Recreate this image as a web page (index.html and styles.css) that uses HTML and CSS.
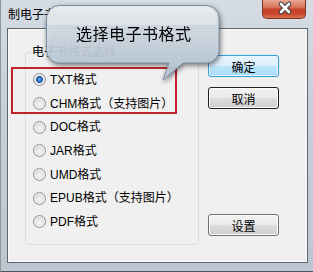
FILE: index.html
```html
<!DOCTYPE html>
<html>
<head>
<meta charset="utf-8">
<link rel="stylesheet" href="styles.css">
</head>
<body>
<div class="window">
  <div class="titlebar">
    <span class="title">制电子书</span>
    <span class="close">
      <svg width="44" height="19" viewBox="0 0 44 19">
        <path d="M18,5 L26,13 M26,5 L18,13" stroke="#3b3b3b" stroke-width="4.6" stroke-linecap="round" fill="none"/>
        <path d="M18,5 L26,13 M26,5 L18,13" stroke="#ffffff" stroke-width="2.6" stroke-linecap="round" fill="none"/>
      </svg>
    </span>
  </div>
  <div class="client">
    <fieldset class="group">
      <legend class="legend">电子书格式选择</legend>
      <div class="options">
        <label class="opt"><span class="radio checked"></span><span class="lbl">TXT格式</span></label>
        <label class="opt"><span class="radio"></span><span class="lbl">CHM格式（支持图片）</span></label>
        <label class="opt"><span class="radio"></span><span class="lbl">DOC格式</span></label>
        <label class="opt"><span class="radio"></span><span class="lbl">JAR格式</span></label>
        <label class="opt"><span class="radio"></span><span class="lbl">UMD格式</span></label>
        <label class="opt"><span class="radio"></span><span class="lbl">EPUB格式（支持图片）</span></label>
        <label class="opt"><span class="radio"></span><span class="lbl">PDF格式</span></label>
      </div>
    </fieldset>
    <div class="buttons">
      <button class="btn default">确定</button>
      <button class="btn focused">取消</button>
      <button class="btn settings">设置</button>
    </div>
  </div>
  <div class="highlight"></div>
  <div class="callout">
    <svg class="bubble" width="182" height="80" viewBox="0 0 182 80">
      <defs>
        <linearGradient id="bg" x1="0" y1="0" x2="0" y2="1">
          <stop offset="0" stop-color="#eef3f8"/>
          <stop offset="0.45" stop-color="#d3dee9"/>
          <stop offset="1" stop-color="#b9cadb"/>
        </linearGradient>
      </defs>
      <path d="M13.5,0.5 H160 A13,13 0 0 1 173,13.5 V45 A13,13 0 0 1 160,58 H137 L117,75 L123,58 H13.5 A13,13 0 0 1 0.5,45 V13.5 A13,13 0 0 1 13.5,0.5 Z" fill="url(#bg)" fill-opacity="0.88" stroke="#7a8ea6" stroke-width="1"/>
      <path d="M14,2.5 H159 A11,11 0 0 1 170.5,13.5 V20 H2.5 V13.5 A11,11 0 0 1 14,2.5 Z" fill="#ffffff" fill-opacity="0.3"/>
    </svg>
    <span class="callout-text">选择电子书格式</span>
  </div>
</div>
</body>
</html>
```
FILE: styles.css
```css
html, body {
  margin: 0;
  padding: 0;
}
body {
  width: 313px;
  height: 272px;
  overflow: hidden;
  font-family: "Liberation Sans", "Noto Sans CJK SC", sans-serif;
  font-size: 12px;
  color: #000;
}
.window {
  position: relative;
  width: 313px;
  height: 272px;
  box-sizing: border-box;
  padding: 0 5px 8px 6px;
  display: flex;
  flex-direction: column;
  background: linear-gradient(180deg, #d5dce4 0%, #c9d2dc 30%, #bcc6d1 100%);
  border-left: 1px solid #8d969f;
  border-bottom: 1px solid #4f565c;
}
.titlebar {
  height: 28px;
  display: flex;
  justify-content: space-between;
  align-items: flex-start;
}
.title {
  margin-top: 7px;
  margin-left: 1px;
  font-size: 12px;
  line-height: 16px;
  color: #000;
}
.close {
  width: 44px;
  height: 19px;
  margin-right: 2px;
  box-sizing: border-box;
  border: 1px solid #7a3326;
  border-top: none;
  border-radius: 0 0 5px 5px;
  background: linear-gradient(180deg, #e9a795 0%, #d8735c 40%, #c6452b 52%, #c9442a 75%, #d8704f 100%);
  display: block;
  overflow: hidden;
}
.close svg {
  display: block;
  margin-top: -1px;
}
.client {
  flex: 1;
  display: flex;
  background: #f0f0f0;
  border: 1px solid #5f666c;
  box-shadow: inset 0 0 0 1px #fafafa;
  padding: 16px 0 0 17px;
}
.group {
  width: 174px;
  height: 200px;
  box-sizing: border-box;
  margin: 0;
  padding: 0;
  border: 1px solid #d5dfe5;
  border-radius: 3px;
}
.legend {
  margin-left: 5px;
  padding: 0 1px;
  font-size: 12px;
  line-height: 14px;
  color: #000;
}
.options {
  padding-top: 9px;
  display: flex;
  flex-direction: column;
}
.opt {
  height: 23.7px;
  display: flex;
  align-items: center;
  padding-left: 7px;
}
.radio {
  width: 11px;
  height: 11px;
  border-radius: 50%;
  border: 1px solid #8f9092;
  background: radial-gradient(circle at 50% 60%, #f7f7f7 0%, #e3e3e3 45%, #c8c8c8 100%);
  box-shadow: inset 0 0 0 1px #f3f3f3;
  flex: none;
}
.radio.checked {
  background: radial-gradient(circle at 50% 50%, #6fb4ec 0%, #2a6fbd 28%, #1a4f96 40%, #e4e4e4 48%, #d4d4d4 100%);
}
.lbl {
  margin-left: 4px;
  line-height: 14px;
  white-space: nowrap;
}
.buttons {
  display: flex;
  flex-direction: column;
  margin-left: 9px;
  padding-top: 10px;
}
.btn {
  width: 71px;
  height: 22px;
  box-sizing: border-box;
  margin: 0;
  padding: 0;
  font-family: "Liberation Sans", "Noto Sans CJK SC", sans-serif;
  font-size: 12px;
  color: #000;
  border: 1px solid #707070;
  border-radius: 3px;
  background: linear-gradient(180deg, #f2f2f2 0%, #ebebeb 48%, #dddddd 52%, #cfcfcf 100%);
  box-shadow: inset 0 0 0 1px #fcfcfc;
}
.btn.default {
  border-color: #3c9fd6;
  background: linear-gradient(180deg, #eaf6fd 0%, #d9f0fc 48%, #bee6fd 52%, #a7d9f5 100%);
  box-shadow: inset 0 0 0 1px #e9f7fe, 0 0 1px #5ac8f0;
}
.btn.focused {
  margin-top: 10px;
  border-color: #1f1f1f;
}
.btn.settings {
  margin-top: 105px;
}
.highlight {
  position: absolute;
  left: 10px;
  top: 67px;
  width: 166px;
  height: 47px;
  box-sizing: border-box;
  border: 2px solid #bf2329;
}
.callout {
  position: absolute;
  left: 45px;
  top: 5px;
  width: 182px;
  height: 80px;
  filter: drop-shadow(1px 2px 2.5px rgba(30, 30, 30, 0.65));
}
.bubble {
  display: block;
}
.callout-text {
  position: absolute;
  left: 30px;
  top: 18px;
  font-family: "Noto Sans CJK SC", sans-serif;
  font-size: 16px;
  line-height: 20px;
  letter-spacing: 0.5px;
  color: #000;
  white-space: nowrap;
}
```
